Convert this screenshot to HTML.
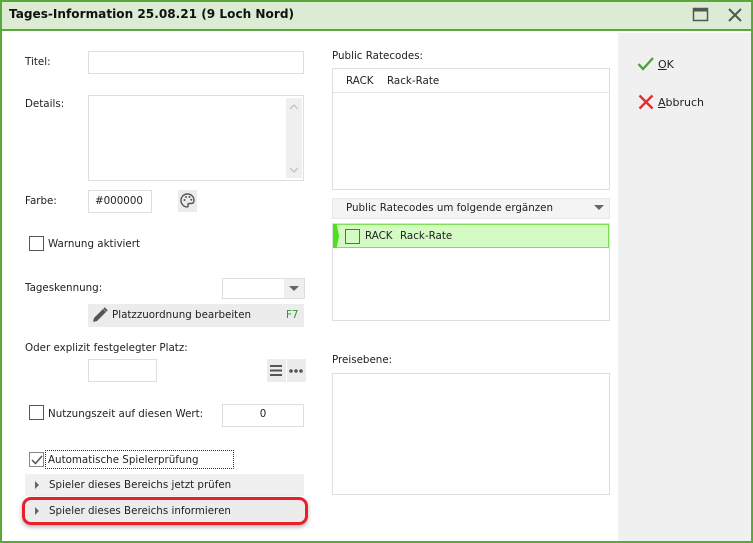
<!DOCTYPE html>
<html><head><meta charset="utf-8"><style>
*{box-sizing:border-box;margin:0;padding:0}
body{width:753px;height:543px;overflow:hidden;background:#fff;font-family:"DejaVu Sans","Liberation Sans",sans-serif;font-size:10.3px;color:#222;position:relative}
.a{position:absolute}
.win{left:0;top:0;width:753px;height:543px;border:2px solid #5aa83a}
.title{left:2px;top:2px;width:749px;height:29px;background:#dcebd4;border-bottom:2px solid #5aa83a}
.tt{left:9px;top:7px;font-weight:bold;font-size:12.1px;color:#111}
.side{left:618px;top:33px;width:133px;height:508px;background:#f0f0f0}
.in{border:1px solid #dedede;background:#fff}
.lbl{font-size:10.3px;margin-top:1px}
.cb{width:15px;height:15px;border:1px solid #555;background:#fff}
</style></head><body>
<div class="a win"></div>
<div class="a title"></div>
<div class="a tt">Tages-Information 25.08.21 (9 Loch Nord)</div>
<svg class="a" style="left:692px;top:7px" width="18" height="16"><rect x="1.5" y="1.5" width="14" height="12" fill="none" stroke="#555" stroke-width="1.5"/><rect x="1.5" y="1.5" width="14" height="3" fill="#555"/></svg>
<svg class="a" style="left:727px;top:7px" width="16" height="16"><path d="M2 2L14 14M14 2L2 14" stroke="#555" stroke-width="2"/></svg>
<div class="a side"></div>

<div class="a lbl" style="left:25px;top:55px">Titel:</div>
<div class="a in" style="left:88px;top:51px;width:216px;height:23px"></div>
<div class="a lbl" style="left:25px;top:97px">Details:</div>
<div class="a in" style="left:88px;top:95px;width:216px;height:86px"></div>
<div class="a" style="left:286px;top:98px;width:16px;height:80px;background:#efefef"></div>
<svg class="a" style="left:288px;top:102px" width="12" height="74"><path d="M2 7l4-4 4 4M2 66l4 4 4-4" fill="none" stroke="#c4c4c4" stroke-width="1.3"/></svg>
<div class="a lbl" style="left:25px;top:194px">Farbe:</div>
<div class="a in" style="left:88px;top:190px;width:64px;height:23px;padding:4px 0 0 6px">#000000</div>
<div class="a" style="left:178px;top:190px;width:19px;height:22px;background:#ececec"></div>
<svg class="a" style="left:179px;top:192px" width="17" height="17"><path d="M8.5 2C4.5 2 2 5 2 8.5 2 12 5 15 8 15c1.2 0 1.5-.8 1-1.7-.5-.9 0-1.8 1.2-1.8H12c2 0 3-1.2 3-3C15 4.5 12 2 8.5 2z" fill="none" stroke="#555" stroke-width="1.4"/><circle cx="5.5" cy="8" r="1" fill="#555"/><circle cx="7" cy="5" r="1" fill="#555"/><circle cx="10.5" cy="5" r="1" fill="#555"/><circle cx="12.3" cy="7.8" r="1" fill="#555"/></svg>
<div class="a cb" style="left:29px;top:236px"></div>
<div class="a lbl" style="left:48px;top:237px">Warnung aktiviert</div>

<div class="a lbl" style="left:25px;top:281px">Tageskennung:</div>
<div class="a in" style="left:222px;top:278px;width:83px;height:21px"></div>
<div class="a" style="left:284px;top:279px;width:20px;height:19px;background:#efefef"></div>
<div class="a" style="left:289px;top:286px;width:0;height:0;border-left:5px solid transparent;border-right:5px solid transparent;border-top:5px solid #666"></div>
<div class="a" style="left:88px;top:304px;width:216px;height:23px;background:#ececec"></div>
<svg class="a" style="left:91px;top:306px" width="18" height="18"><path d="M2 16l1-4 9-9 3 3-9 9z" fill="#555"/><path d="M13 2l3 3" stroke="#555" stroke-width="2"/></svg>
<div class="a lbl" style="left:112px;top:308px">Platzzuordnung bearbeiten</div>
<div class="a lbl" style="left:286px;top:308px;color:#2a9a2a">F7</div>
<div class="a lbl" style="left:25px;top:341px">Oder explizit festgelegter Platz:</div>
<div class="a in" style="left:88px;top:359px;width:69px;height:23px"></div>
<div class="a" style="left:267px;top:359px;width:19px;height:23px;background:#ececec"></div>
<div class="a" style="left:287px;top:359px;width:19px;height:23px;background:#ececec"></div>
<svg class="a" style="left:268px;top:362px" width="38" height="18"><path d="M2 4h12M2 8.5h12M2 13h12" stroke="#555" stroke-width="2"/><circle cx="23" cy="9" r="1.8" fill="#555"/><circle cx="28" cy="9" r="1.8" fill="#555"/><circle cx="33" cy="9" r="1.8" fill="#555"/></svg>
<div class="a cb" style="left:29px;top:405px"></div>
<div class="a lbl" style="left:48px;top:407px">Nutzungszeit auf diesen Wert:</div>
<div class="a in" style="left:222px;top:404px;width:82px;height:23px;text-align:center;padding-top:3px">0</div>
<div class="a cb" style="left:29px;top:452px;border-color:#888"></div>
<svg class="a" style="left:30px;top:453px" width="14" height="14"><path d="M2 7l3.5 3.5L12 3" fill="none" stroke="#555" stroke-width="1.5"/></svg>
<div class="a" style="left:45px;top:450px;width:189px;height:19px;border:1px dotted #333"></div>
<div class="a lbl" style="left:48px;top:453px">Automatische Spielerprüfung</div>
<div class="a" style="left:25px;top:474px;width:279px;height:22px;background:#f0f0f0"></div>
<div class="a" style="left:35px;top:481px;border-top:4px solid transparent;border-bottom:4px solid transparent;border-left:4px solid #666"></div>
<div class="a lbl" style="left:49px;top:478px">Spieler dieses Bereichs jetzt prüfen</div>
<div class="a" style="left:22px;top:497px;width:286px;height:28px;border:3px solid #e8202a;border-radius:9px;background:#ececec;box-shadow:0 2px 4px rgba(0,0,0,.3)"></div>
<div class="a" style="left:35px;top:507px;border-top:4px solid transparent;border-bottom:4px solid transparent;border-left:4px solid #666"></div>
<div class="a lbl" style="left:49px;top:504px">Spieler dieses Bereichs informieren</div>

<div class="a lbl" style="left:332px;top:49px">Public Ratecodes:</div>
<div class="a in" style="left:332px;top:68px;width:278px;height:122px"></div>
<div class="a" style="left:333px;top:92px;width:276px;height:1px;background:#e6e6e6"></div>
<div class="a lbl" style="left:346px;top:74px">RACK</div>
<div class="a lbl" style="left:387px;top:74px">Rack-Rate</div>
<div class="a" style="left:332px;top:198px;width:278px;height:21px;background:#f4f4f4;border:1px solid #e8e8e8"></div>
<div class="a lbl" style="left:346px;top:201px">Public Ratecodes um folgende ergänzen</div>
<div class="a" style="left:594px;top:205px;border-left:5px solid transparent;border-right:5px solid transparent;border-top:5px solid #666"></div>
<div class="a in" style="left:332px;top:223px;width:278px;height:98px"></div>
<div class="a" style="left:333px;top:224px;width:276px;height:24px;background:#d4fbc4;border:1px solid #7fdf55"></div>
<div class="a" style="left:333px;top:224px;width:6px;height:24px;background:#4ce01a;clip-path:polygon(0 0,60% 0,100% 50%,60% 100%,0 100%)"></div>
<div class="a cb" style="left:345px;top:229px;border-color:#666;background:transparent"></div>
<div class="a lbl" style="left:365px;top:229px">RACK</div>
<div class="a lbl" style="left:400px;top:229px">Rack-Rate</div>
<div class="a lbl" style="left:332px;top:353px">Preisebene:</div>
<div class="a in" style="left:332px;top:373px;width:278px;height:122px"></div>

<svg class="a" style="left:637px;top:56px" width="18" height="16"><path d="M1.5 8l4.5 5L16 2" fill="none" stroke="#4aa33a" stroke-width="2.4"/></svg>
<div class="a lbl" style="left:658px;top:57px;font-size:11px"><u>O</u>K</div>
<svg class="a" style="left:638px;top:94px" width="16" height="16"><path d="M1.5 1.5l13 13M14.5 1.5l-13 13" stroke="#e03030" stroke-width="2.4"/></svg>
<div class="a lbl" style="left:658px;top:95px;font-size:11px"><u>A</u>bbruch</div>
</body></html>
